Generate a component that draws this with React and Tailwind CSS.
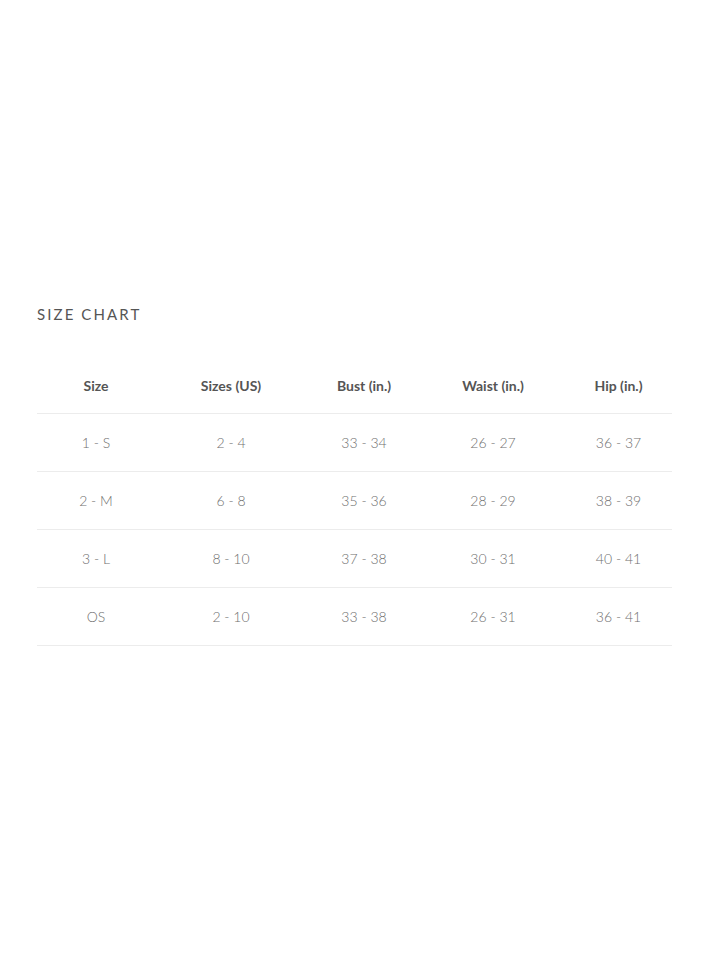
import React from 'react';

const rows = [
    ['1 - S', '2 - 4', '33 - 34', '26 - 27', '36 - 37'],
    ['2 - M', '6 - 8', '35 - 36', '28 - 29', '38 - 39'],
    ['3 - L', '8 - 10', '37 - 38', '30 - 31', '40 - 41'],
    ['OS', '2 - 10', '33 - 38', '26 - 31', '36 - 41'],
];

const headers = ['Size', 'Sizes (US)', 'Bust (in.)', 'Waist (in.)', 'Hip (in.)'];

const cols = 'grid grid-cols-[118px_152px_114px_144px_107px]';

const App = () => {
    return (
        <div className="min-h-[960px] bg-white font-['Lato','Open_Sans',sans-serif]">
            <div className="px-[37px] pt-[304px]">
                <h2 className="text-[15px] leading-5 tracking-[0.14em] text-[#555] font-normal">SIZE CHART</h2>
                <div className="mt-[34px] w-[635px]">
                    <div className={`${cols} h-[56px] items-center border-b border-[#ececec]`}>
                        {headers.map((h) => (
                            <div key={h} className="text-center text-[14px] font-bold text-[#555]">{h}</div>
                        ))}
                    </div>
                    {rows.map((r) => (
                        <div key={r[0]} className={`${cols} h-[58px] items-center border-b border-[#ececec]`}>
                            {r.map((c, i) => (
                                <div key={i} className="text-center text-[14px] font-light text-[#6f6f6f]">{c}</div>
                            ))}
                        </div>
                    ))}
                </div>
            </div>
        </div>
    );
};

export default App;
